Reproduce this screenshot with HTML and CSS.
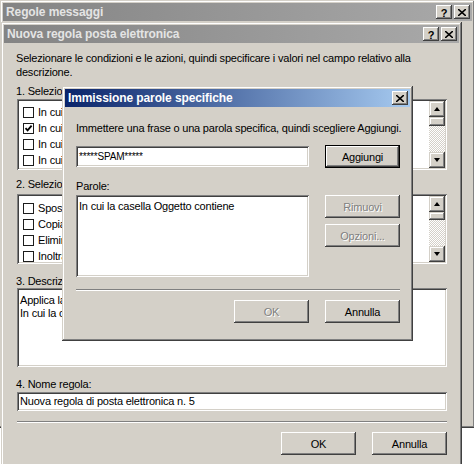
FILE: index.html
```html
<!DOCTYPE html>
<html>
<head>
<meta charset="utf-8">
<title>Regole messaggi</title>
<link rel="stylesheet" href="styles.css">
</head>
<body>
<div class="desk">

  <div class="win outer">
    <div class="titlebar inactive">
      <span class="ttext">Regole messaggi</span>
      <div class="tbtns">
        <span class="tbtn help">?</span>
        <span class="tbtn"><svg class="xicon" viewBox="0 0 8 7" width="8" height="7"><path d="M0 0L8 7M8 0L0 7" stroke="#000" stroke-width="1.6"/></svg></span>
      </div>
    </div>
    <div class="outer-body">
      <div class="outer-list"></div>
    </div>
  </div>

  <div class="win inner">
    <div class="titlebar inactive">
      <span class="ttext">Nuova regola posta elettronica</span>
      <div class="tbtns">
        <span class="tbtn help">?</span>
        <span class="tbtn"><svg class="xicon" viewBox="0 0 8 7" width="8" height="7"><path d="M0 0L8 7M8 0L0 7" stroke="#000" stroke-width="1.6"/></svg></span>
      </div>
    </div>
    <div class="inner-body">
      <p class="intro">Selezionare le condizioni e le azioni, quindi specificare i valori nel campo relativo alla descrizione.</p>
      <div class="label l1">1. Selezionare le condizioni della regola:</div>
      <div class="sunken list list1">
        <div class="items">
          <div class="item"><span class="cb"></span><span class="it">In cui la riga Da contiene persone</span></div>
          <div class="item"><span class="cb"><svg viewBox="0 0 9 9" width="9" height="9"><path d="M1.5 4.2L3.6 6.4L7.6 1.6" fill="none" stroke="#000" stroke-width="1.8"/></svg></span><span class="it">In cui la riga Oggetto contiene parole specifiche</span></div>
          <div class="item"><span class="cb"></span><span class="it">In cui il corpo del messaggio contiene parole specifiche</span></div>
          <div class="item"><span class="cb"></span><span class="it">In cui la riga A contiene persone</span></div>
        </div>
        <div class="vscroll">
          <span class="sbtn"><i class="arr up"></i></span>
          <span class="thumb t1"></span>
          <span class="track"></span>
          <span class="sbtn"><i class="arr down"></i></span>
        </div>
      </div>
      <div class="label l2">2. Selezionare le azioni per la regola:</div>
      <div class="sunken list list2">
        <div class="items">
          <div class="item"><span class="cb"></span><span class="it">Sposta nella cartella specificata</span></div>
          <div class="item"><span class="cb"></span><span class="it">Copia nella cartella specificata</span></div>
          <div class="item"><span class="cb"></span><span class="it">Elimina</span></div>
          <div class="item"><span class="cb"></span><span class="it">Inoltra a persone</span></div>
        </div>
        <div class="vscroll">
          <span class="sbtn"><i class="arr up"></i></span>
          <span class="thumb t2"></span>
          <span class="track"></span>
          <span class="sbtn"><i class="arr down"></i></span>
        </div>
      </div>
      <div class="label l3">3. Descrizione regola (fare clic su un valore sottolineato per modificarlo):</div>
      <div class="sunken desc">
        <div>Applica la regola dopo l'arrivo del messaggio</div>
        <div>In cui la casella Oggetto contiene parole specifiche</div>
      </div>
      <div class="label l4">4. Nome regola:</div>
      <div class="sunken field name">Nuova regola di posta elettronica n. 5</div>
      <div class="sep sep-inner"></div>
      <div class="btnrow inner-btns">
        <span class="btn">OK</span>
        <span class="btn">Annulla</span>
      </div>
    </div>
  </div>

  <div class="win modal">
    <div class="titlebar active">
      <span class="ttext">Immissione parole specifiche</span>
      <div class="tbtns">
        <span class="tbtn"><svg class="xicon" viewBox="0 0 8 7" width="8" height="7"><path d="M0 0L8 7M8 0L0 7" stroke="#000" stroke-width="1.6"/></svg></span>
      </div>
    </div>
    <div class="modal-body">
      <p class="mtext">Immettere una frase o una parola specifica, quindi scegliere Aggiungi.</p>
      <div class="mrow row1">
        <div class="sunken field word">*****SPAM*****</div>
        <span class="btn default">Aggiungi</span>
      </div>
      <div class="label lp">Parole:</div>
      <div class="mrow row2">
        <div class="sunken words">In cui la casella Oggetto contiene</div>
        <div class="sidebtns">
          <span class="btn disabled">Rimuovi</span>
          <span class="btn disabled">Opzioni...</span>
        </div>
      </div>
      <div class="sep sep-modal"></div>
      <div class="btnrow modal-btns">
        <span class="btn disabled">OK</span>
        <span class="btn">Annulla</span>
      </div>
    </div>
  </div>

</div>
</body>
</html>
```

FILE: styles.css
```css
* { box-sizing: border-box; }
html, body { margin: 0; padding: 0; }
body {
  width: 474px;
  height: 464px;
  overflow: hidden;
  background: #d4d0c8;
  font-family: "Liberation Sans", Arial, sans-serif;
  font-size: 11px;
  line-height: 14px;
  letter-spacing: -0.2px;
  color: #000;
}
p { margin: 0; }
.desk { position: relative; width: 474px; height: 464px; overflow: hidden; }

/* window frames */
.win {
  position: absolute;
  background: #d4d0c8;
  padding: 3px;
  display: flex;
  flex-direction: column;
  box-shadow: inset -1px -1px #404040, inset 1px 1px #d4d0c8, inset -2px -2px #808080, inset 2px 2px #fff;
}
.outer { left: 0; top: 0; width: 475px; height: 490px; }
.inner { left: 1px; top: 22px; width: 461px; height: 470px; }
.modal { left: 62px; top: 86px; width: 351px; height: 255px; }

.titlebar {
  height: 18px;
  flex: none;
  display: flex;
  align-items: center;
  justify-content: space-between;
  padding: 0 2px 0 3px;
  font-weight: bold;
  font-size: 12px;
  letter-spacing: -0.1px;
}
.titlebar.inactive { background: linear-gradient(90deg, #848484, #a9a9a9); color: #e4e4e4; }
.titlebar.active { background: linear-gradient(90deg, #0a246a, #a6caf0); color: #fff; }
.ttext { white-space: nowrap; }
.tbtns { display: flex; gap: 2px; }
.tbtn {
  width: 16px;
  height: 14px;
  background: #d4d0c8;
  color: #000;
  display: flex;
  align-items: center;
  justify-content: center;
  font-size: 11px;
  font-weight: bold;
  line-height: 14px;
  letter-spacing: 0;
  box-shadow: inset -1px -1px #404040, inset 1px 1px #fff, inset -2px -2px #808080;
}
.tbtn.help { padding-top: 1px; }
.xicon { display: block; margin-top: 1px; }

/* outer window body */
.outer-body { flex: 1; padding-top: 405px; }
.outer-list { height: 80px; margin: 0 -3px; background: #fff; box-shadow: inset 0 1px #808080, inset 0 2px #404040; }

/* generic controls */
.sunken {
  background: #fff;
  box-shadow: inset 1px 1px #808080, inset -1px -1px #fff, inset 2px 2px #404040, inset -2px -2px #d4d0c8;
  white-space: nowrap;
  overflow: hidden;
}
.btn {
  width: 75px;
  height: 23px;
  display: flex;
  align-items: center;
  justify-content: center;
  background: #d4d0c8;
  box-shadow: inset -1px -1px #404040, inset 1px 1px #fff, inset -2px -2px #808080, inset 2px 2px #d4d0c8;
}
.btn.default { box-shadow: inset 0 0 0 1px #000, inset -2px -2px #404040, inset 2px 2px #fff, inset -3px -3px #808080; }
.btn.disabled { color: #808080; text-shadow: 1px 1px #fff; }
.sep { height: 2px; box-shadow: inset 0 1px #808080, inset 0 -1px #fff; }

/* inner window body */
.inner-body { padding: 8px 11px 0 13px; display: flex; flex-direction: column; }
.intro { margin-left: -1px; width: 420px; }
.label { margin-left: -1px; white-space: nowrap; }
.l1 { margin-top: 5px; }
.l2 { margin-top: 7px; }
.l3 { margin-top: 10px; }
.l4 { margin-top: 10px; }

.list { display: flex; width: 430px; padding: 2px; }
.list1 { height: 71px; margin-top: 1px; }
.list2 { height: 70px; margin-top: 3px; }
.items { flex: 1; padding: 3px 0 0 4px; overflow: hidden; }
.list2 .items { padding-top: 4px; }
.item { height: 16px; display: flex; align-items: center; white-space: nowrap; }
.it { line-height: 11px; }
.cb {
  width: 11px;
  height: 11px;
  border: 1px solid #1c1c1c;
  background: #fff;
  margin-right: 4px;
  flex: none;
  display: flex;
  align-items: center;
  justify-content: center;
}
.cb svg { display: block; }

.vscroll { width: 16px; display: flex; flex-direction: column; flex: none; }
.sbtn {
  height: 16px;
  flex: none;
  background: #d4d0c8;
  display: flex;
  align-items: center;
  justify-content: center;
  box-shadow: inset -1px -1px #404040, inset 1px 1px #d4d0c8, inset -2px -2px #808080, inset 2px 2px #fff;
}
.thumb {
  flex: none;
  background: #d4d0c8;
  box-shadow: inset -1px -1px #404040, inset 1px 1px #d4d0c8, inset -2px -2px #808080, inset 2px 2px #fff;
}
.t1 { height: 9px; }
.t2 { height: 8px; }
.track { flex: 1; background: repeating-conic-gradient(#fff 0 25%, #d4d0c8 0 50%) 0 0 / 2px 2px; }
.arr { width: 0; height: 0; border-left: 3.5px solid transparent; border-right: 3.5px solid transparent; }
.arr.up { border-bottom: 4px solid #000; margin-top: -1px; }
.arr.down { border-top: 4px solid #000; }

.desc { width: 430px; height: 79px; padding: 6px 2px 0 3px; line-height: 13px; }
.name { width: 430px; height: 19px; margin-top: 1px; padding: 2px 3px 0; line-height: 15px; }
.sep-inner { width: 430px; margin-top: 10px; }
.btnrow { display: flex; justify-content: flex-end; gap: 16px; }
.inner-btns { width: 430px; margin-top: 9px; }

/* modal */
.modal-body { padding: 14px 10px 0 11px; display: flex; flex-direction: column; }
.mtext { white-space: nowrap; }
.mrow { display: flex; justify-content: space-between; }
.row1 { margin-top: 10px; align-items: flex-start; }
.word { width: 233px; height: 21px; margin-top: 1px; padding: 3px 3px 0; font-size: 10px; line-height: 15px; }
.lp { margin-top: 11px; margin-left: 0; }
.row2 { margin-top: 2px; }
.words { width: 233px; height: 82px; padding: 5px 3px 0; line-height: 13px; }
.sidebtns { display: flex; flex-direction: column; gap: 6px; }
.sep-modal { margin-top: 12px; }
.modal-btns { margin-top: 9px; }
```
